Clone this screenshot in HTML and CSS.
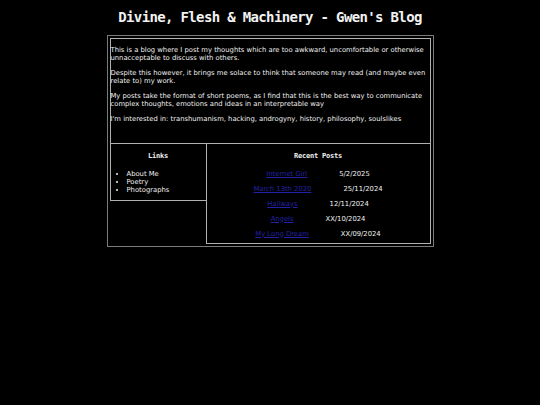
FILE: index.html
```html
<!DOCTYPE html>
<html lang="en">
<head>
<meta charset="utf-8">
<title>Gwen's Blog</title>
<link rel="stylesheet" href="styles.css">
</head>
<body>
<h1 class="title">Divine, Flesh &amp; Machinery - Gwen's Blog</h1>
<div class="container">
  <div class="intro">
    <p>This is a blog where I post my thoughts which are too awkward, uncomfortable or otherwise unnacceptable to discuss with others.</p>
    <p>Despite this however, it brings me solace to think that someone may read (and maybe even relate to) my work.</p>
    <p>My posts take the format of short poems, as I find that this is the best way to communicate complex thoughts, emotions and ideas in an interpretable way</p>
    <p>I'm interested in: transhumanism, hacking, androgyny, history, philosophy, soulslikes</p>
  </div>
  <div class="bottom">
    <div class="links">
      <h2 class="box-title">Links</h2>
      <ul>
        <li>About Me</li>
        <li>Poetry</li>
        <li>Photographs</li>
      </ul>
    </div>
    <div class="posts">
      <h2 class="box-title">Recent Posts</h2>
      <div class="post"><a href="#">Internet Girl</a><span>5/2/2025</span></div>
      <div class="post"><a href="#">March 13th 2020</a><span>25/11/2024</span></div>
      <div class="post"><a href="#">Hallways</a><span>12/11/2024</span></div>
      <div class="post"><a href="#">Angels</a><span>XX/10/2024</span></div>
      <div class="post"><a href="#">My Long Dream</a><span>XX/09/2024</span></div>
    </div>
  </div>
</div>
</body>
</html>
```

FILE: styles.css
```css
html, body {
  margin: 0;
  padding: 0;
  background: #000;
}
body {
  color: #f0f0f0;
  font-family: "DejaVu Sans", Verdana, sans-serif;
  font-size: 6.8px;
  line-height: 8.3px;
}
.title {
  margin: 9px 0 9px;
  font-family: "DejaVu Sans Mono", monospace;
  font-weight: bold;
  font-size: 14px;
  line-height: 17px;
  letter-spacing: -0.65px;
  text-align: center;
  color: #f2f2f2;
}
.container {
  width: 321px;
  margin: 0 auto;
  padding: 2px;
  border: 1px solid #7a7a7a;
}
.intro {
  border: 1px solid #b0b0b0;
  border-bottom: none;
  padding: 0 4px 13px 0;
}
.intro p {
  margin: 6.5px 0;
}
.bottom {
  display: flex;
  align-items: flex-start;
}
.links {
  width: 95px;
  border: 1px solid #b0b0b0;
  padding-bottom: 6px;
}
.posts {
  flex: 1;
  border: 1px solid #b0b0b0;
  margin-left: -1px;
  padding-bottom: 1px;
}
.box-title {
  margin: 8px 0 0;
  font-family: "DejaVu Sans Mono", monospace;
  font-weight: bold;
  font-size: 7px;
  line-height: 8px;
  letter-spacing: -0.2px;
  text-align: center;
}
.links ul {
  margin: 10px 0 0;
  padding-left: 16px;
}
.posts .box-title {
  margin-bottom: 7px;
}
.post {
  display: flex;
  justify-content: center;
  gap: 32px;
  height: 15px;
  line-height: 15px;
}
.post a {
  color: #2222a8;
  text-decoration: underline;
}
```
